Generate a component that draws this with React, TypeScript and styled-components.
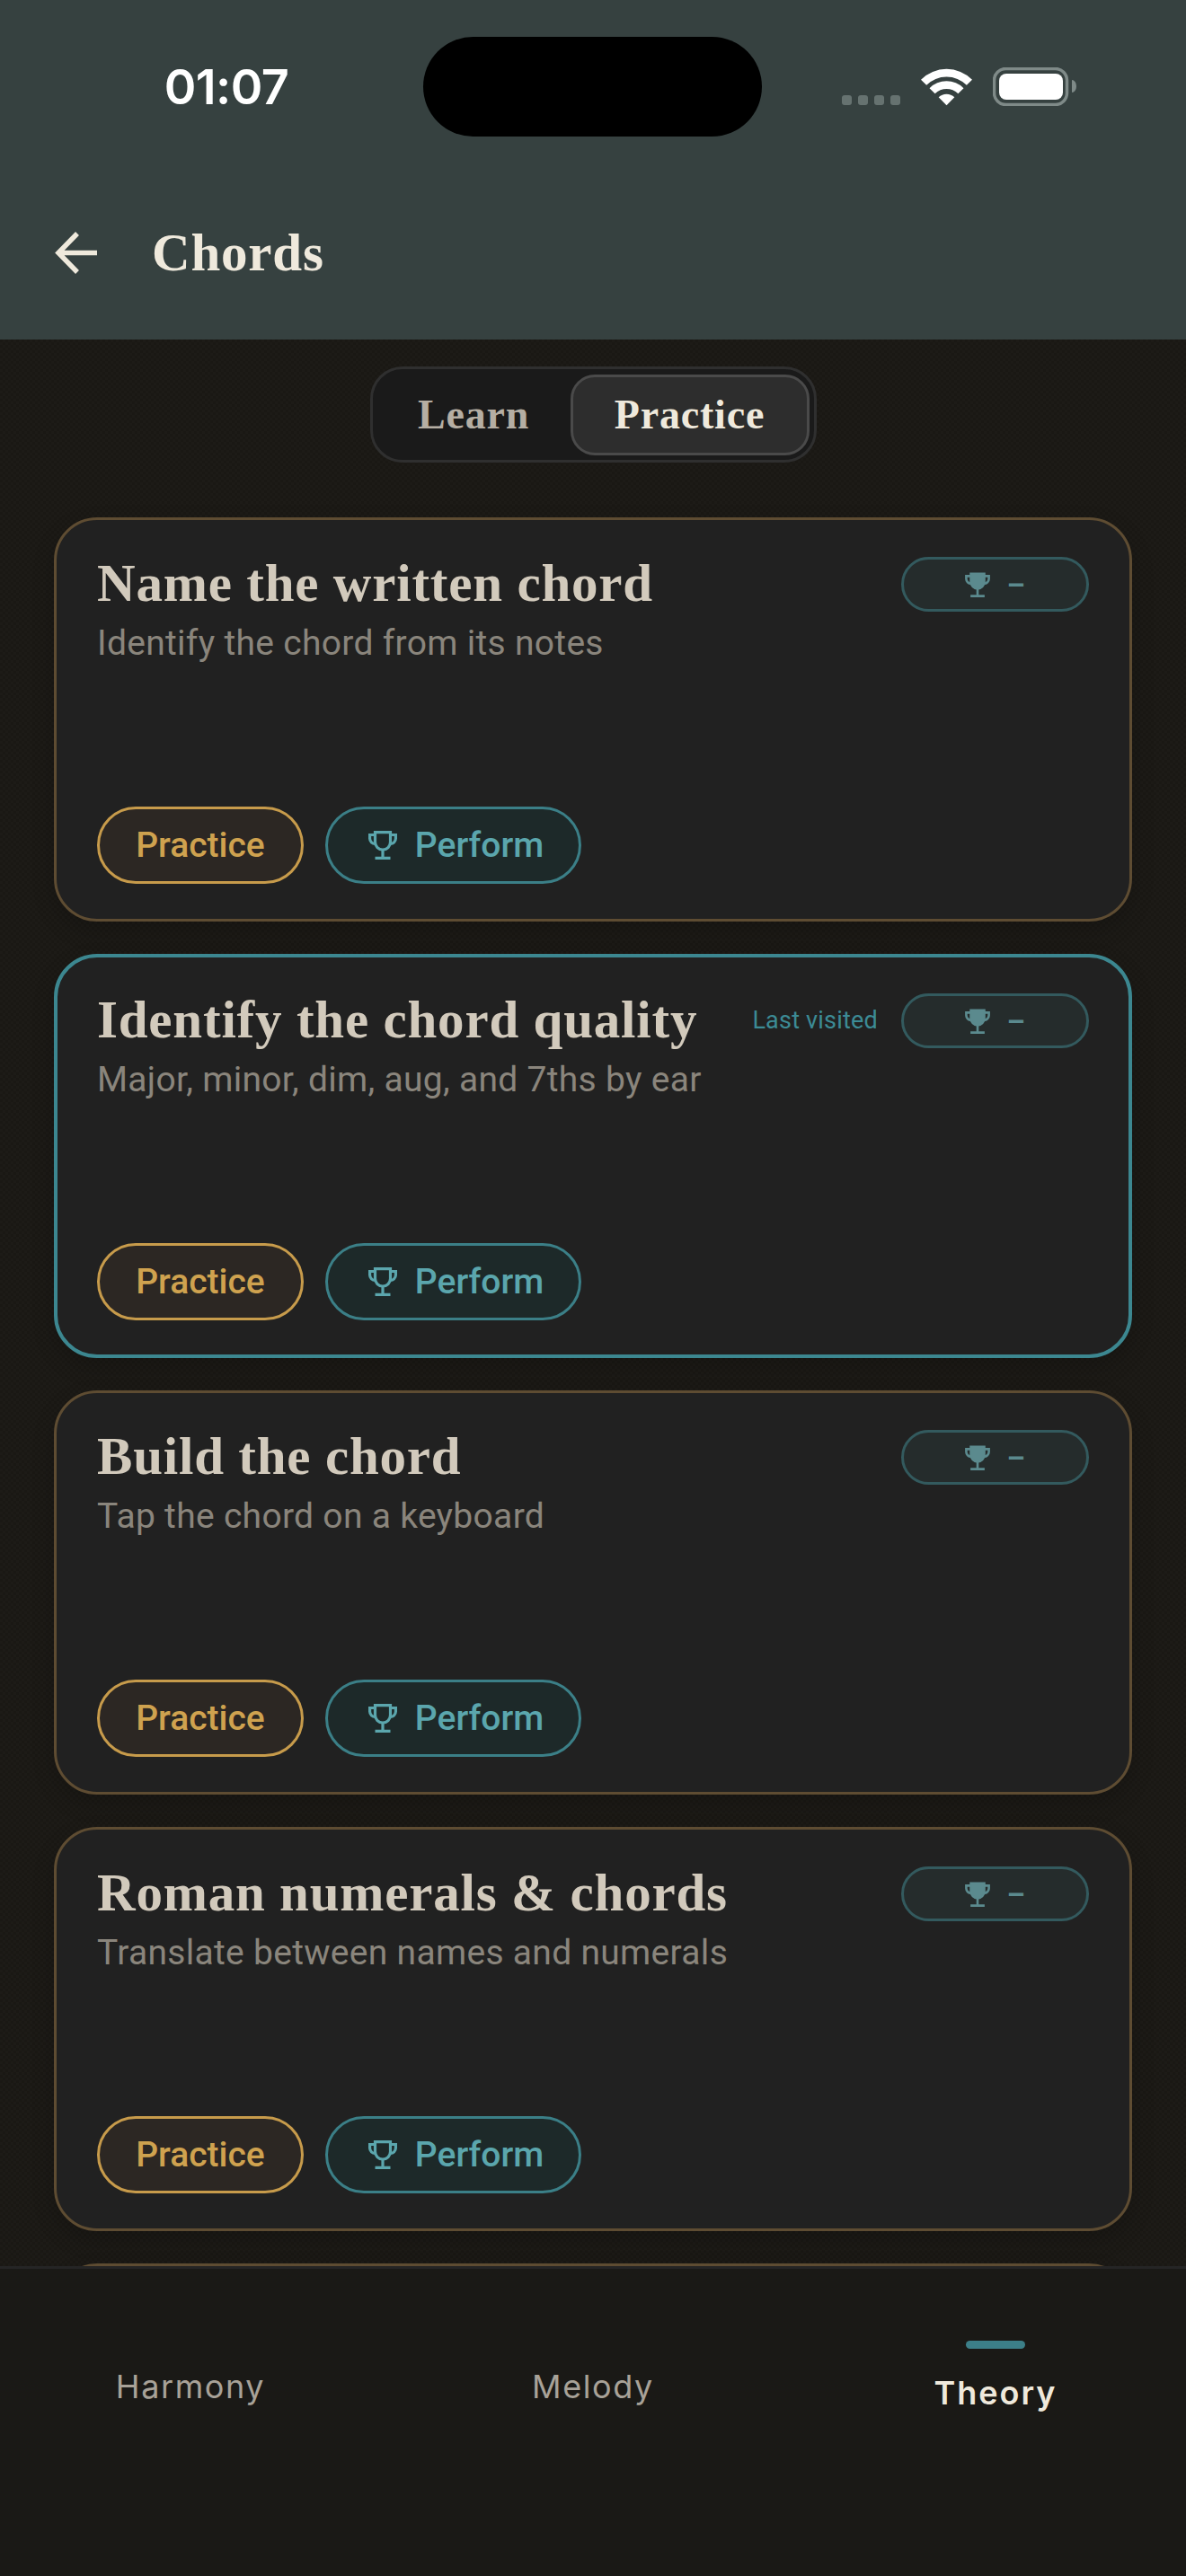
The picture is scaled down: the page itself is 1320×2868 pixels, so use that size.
// Chords practice screen
import React from 'react';
import styled, { createGlobalStyle } from 'styled-components';

const GlobalStyle = createGlobalStyle`
    html, body { margin: 0; padding: 0; background: #1a1814; }
    * { box-sizing: border-box; }
`;

const SERIF = '"Liberation Serif", serif';
const SANS = 'Roboto, "Liberation Sans", sans-serif';
const UI = 'Inter, "Liberation Sans", sans-serif';

const Page = styled.div`
    width: 1320px;
    height: 2868px;
    display: flex;
    flex-direction: column;
    overflow: hidden;
    background-color: #1a1814;
    background-image: repeating-conic-gradient(rgba(255, 255, 255, 0.01) 0 25%, transparent 0 50%);
    background-size: 6px 6px;
`;

// ---- header ----
const Header = styled.header`
    flex: 0 0 378px;
    padding-top: 41px;
    background: #364140;
`;
const StatusBar = styled.div`
    display: flex;
    height: 111px;
`;
const TimeSlot = styled.div`
    width: 471px;
    padding-left: 33px;
    display: flex;
    align-items: center;
    justify-content: center;
`;
const Time = styled.span`
    font: 600 54px/1 ${UI};
    color: #fff;
    letter-spacing: -0.6px;
`;
const Island = styled.div`
    width: 377px;
    height: 111px;
    border-radius: 56px;
    background: #000;
`;
const StatusIcons = styled.div`
    display: flex;
    align-items: center;
    padding-left: 89px;
`;
const Dots = styled.div`
    display: flex;
    gap: 7px;
    align-self: flex-end;
    margin: 0 23px 35px 0;
`;
const Dot = styled.i`
    width: 11px;
    height: 11px;
    border-radius: 3px;
    background: #667270;
`;
const WifiIcon = styled.svg`
    margin-right: 23px;
    display: block;
`;
const NavRow = styled.div`
    display: flex;
    align-items: center;
    height: 90px;
    margin-top: 84px;
    padding-left: 61px;
    gap: 61px;
`;
const ScreenTitle = styled.h1`
    margin: 0;
    font: 700 59px/1 ${SERIF};
    letter-spacing: 0.8px;
    color: #efe9dc;
`;

// ---- segmented control ----
const Content = styled.main`
    flex: 1;
    min-height: 0;
    overflow: hidden;
    display: flex;
    flex-direction: column;
    align-items: center;
    padding-top: 30px;
`;
const Segmented = styled.div`
    flex: none;
    width: 497px;
    height: 107px;
    display: flex;
    align-items: center;
    justify-content: space-between;
    padding: 0 5px;
    border: 3px solid #2f2f2f;
    border-radius: 36px;
    background: #1a1a1a;
`;
const Segment = styled.div<{ $active?: boolean }>`
    height: 90px;
    width: ${(p) => (p.$active ? '266px' : '215px')};
    display: flex;
    align-items: center;
    justify-content: center;
    border-radius: 27px;
    border: 3px solid ${(p) => (p.$active ? '#4a4a4a' : 'transparent')};
    background: ${(p) => (p.$active ? '#2d2d2d' : 'transparent')};
    color: ${(p) => (p.$active ? '#efe9dc' : '#b5aea3')};
    font: 700 46px/1 ${SERIF};
    letter-spacing: 0.8px;
`;

// ---- cards ----
const CardList = styled.div`
    flex: none;
    width: 1200px;
    margin-top: 61px;
    display: flex;
    flex-direction: column;
    gap: 36px;
`;
const Card = styled.article<{ $visited?: boolean }>`
    height: 450px;
    flex: 0 0 450px;
    display: flex;
    flex-direction: column;
    padding: ${(p) => (p.$visited ? '40px 44px 38px' : '41px 45px 39px')};
    border: ${(p) => (p.$visited ? '4px solid #3c8790' : '3px solid #5e4c32')};
    border-radius: 48px;
    background: #212121;
    box-shadow: 0 10px 24px rgba(0, 0, 0, 0.18);
`;
const CardTop = styled.div`
    display: flex;
    justify-content: space-between;
    align-items: flex-start;
`;
const CardTitle = styled.h2`
    margin: -2px 0 0;
    font: 700 59px/62px ${SERIF};
    letter-spacing: 0.8px;
    color: #d2cabc;
    white-space: nowrap;
`;
const CardSub = styled.p`
    margin: 11px 0 0;
    font: 400 39px/50px ${SANS};
    letter-spacing: 0.3px;
    color: #8a857c;
    white-space: nowrap;
`;
const Meta = styled.div`
    display: flex;
    align-items: center;
    gap: 26px;
`;
const LastVisited = styled.span`
    font: 400 27px/1 ${SANS};
    letter-spacing: 0.2px;
    color: #3c8b95;
`;
const Badge = styled.div`
    width: 209px;
    height: 61px;
    display: flex;
    align-items: center;
    justify-content: center;
    gap: 18px;
    border: 3px solid #335a5e;
    border-radius: 31px;
    background: #252c2c;
    color: #5b8a8e;
`;
const Dash = styled.span`
    font: 700 32px/1 ${SANS};
`;
const Actions = styled.div`
    margin-top: auto;
    display: flex;
    gap: 24px;
`;
const Pill = styled.button<{ $tone: 'gold' | 'teal' }>`
    height: 86px;
    width: ${(p) => (p.$tone === 'gold' ? '230px' : '285px')};
    display: flex;
    align-items: center;
    justify-content: center;
    gap: 20px;
    padding: ${(p) => (p.$tone === 'gold' ? '0' : '0 0 0 6px')};
    border: 3px solid ${(p) => (p.$tone === 'gold' ? '#c79b4b' : '#3b7f87')};
    border-radius: 43px;
    background: ${(p) => (p.$tone === 'gold' ? '#2c2723' : '#1d2929')};
    color: ${(p) => (p.$tone === 'gold' ? '#cfa24f' : '#5ba6ad')};
    font: 500 39px/1 ${SANS};
`;

// ---- bottom tabs ----
const TabBar = styled.nav`
    flex: 0 0 345px;
    display: grid;
    grid-template-columns: repeat(3, 448px);
    justify-content: center;
    border-top: 3px solid #252525;
    background: #1a1916;
`;
const Tab = styled.div<{ $active?: boolean }>`
    display: flex;
    flex-direction: column;
    align-items: center;
    padding-top: ${(p) => (p.$active ? '80px' : '109px')};
    font: ${(p) => (p.$active ? 600 : 400)} 36px/44px ${UI};
    letter-spacing: ${(p) => (p.$active ? '2px' : '1.6px')};
    color: ${(p) => (p.$active ? '#efe9dc' : '#a8a298')};
`;
const TabMark = styled.i`
    width: 66px;
    height: 9px;
    margin-bottom: 27px;
    border-radius: 5px;
    background: #3c7f88;
`;

const TrophyOutline = () => (
    <svg width="32" height="32" viewBox="0 0 32 32" fill="none" stroke="currentColor" strokeWidth="3.2">
        <path d="M7.5 1.6H24.5V12.5A8.5 8.5 0 0 1 7.5 12.5Z" />
        <path d="M7.5 4.5H1.6V8.5A6 6 0 0 0 7.8 14.5M24.5 4.5H30.4V8.5A6 6 0 0 1 24.2 14.5" />
        <path d="M16 21V30M7.5 30.4H24.5" />
    </svg>
);

const TrophySolid = () => (
    <svg width="28" height="28" viewBox="0 0 32 32" fill="currentColor" stroke="currentColor" strokeWidth="3">
        <path d="M7.5 2H24.5V12.5A8.5 8.5 0 0 1 7.5 12.5Z" />
        <path d="M7.5 5H1.6V8.5A6 6 0 0 0 7.8 14.5M24.5 5H30.4V8.5A6 6 0 0 1 24.2 14.5" fill="none" />
        <path d="M16 21V30M7 30.4H25" fill="none" />
    </svg>
);

const drills = [
    { title: 'Name the written chord', sub: 'Identify the chord from its notes' },
    { title: 'Identify the chord quality', sub: 'Major, minor, dim, aug, and 7ths by ear', visited: true },
    { title: 'Build the chord', sub: 'Tap the chord on a keyboard' },
    { title: 'Roman numerals & chords', sub: 'Translate between names and numerals' },
];

const App = () => {
    return (
        <Page>
            <GlobalStyle />
            <Header>
                <StatusBar>
                    <TimeSlot>
                        <Time>01:07</Time>
                    </TimeSlot>
                    <Island />
                    <StatusIcons>
                        <Dots>
                            <Dot />
                            <Dot />
                            <Dot />
                            <Dot />
                        </Dots>
                        <WifiIcon width="57" height="42" viewBox="0 0 59.4 42" fill="#fff">
                            <path d="M0 12.3A42 42 0 0 1 59.4 12.3L53 18.7A33 33 0 0 0 6.4 18.7Z" />
                            <path d="M9.9 22.2A28 28 0 0 1 49.5 22.2L43.1 28.6A19 19 0 0 0 16.3 28.6Z" />
                            <path d="M20.5 32.8A13 13 0 0 1 38.9 32.8L29.7 42Z" />
                        </WifiIcon>
                        <svg width="93" height="43" viewBox="0 0 93 43">
                            <rect x="1.5" y="1.5" width="81" height="40" rx="13" fill="none" stroke="#7f8a88" strokeWidth="3.5" />
                            <rect x="7" y="7" width="71" height="29" rx="8" fill="#fff" />
                            <path d="M88 14a5 7 0 0 1 5 7a5 7 0 0 1-5 7Z" fill="#7f8a88" />
                        </svg>
                    </StatusIcons>
                </StatusBar>
                <NavRow>
                    <svg width="47" height="47" viewBox="0 0 47 47" fill="none" stroke="#efe9dc" strokeWidth="5.5">
                        <path d="M47 23.5H4M25 2L4 23.5L25 45" />
                    </svg>
                    <ScreenTitle>Chords</ScreenTitle>
                </NavRow>
            </Header>

            <Content>
                <Segmented>
                    <Segment>Learn</Segment>
                    <Segment $active>Practice</Segment>
                </Segmented>
                <CardList>
                    {drills.map((d) => (
                        <Card key={d.title} $visited={d.visited}>
                            <CardTop>
                                <div>
                                    <CardTitle>{d.title}</CardTitle>
                                    <CardSub>{d.sub}</CardSub>
                                </div>
                                <Meta>
                                    {d.visited && <LastVisited>Last visited</LastVisited>}
                                    <Badge>
                                        <TrophySolid />
                                        <Dash>–</Dash>
                                    </Badge>
                                </Meta>
                            </CardTop>
                            <Actions>
                                <Pill $tone="gold">Practice</Pill>
                                <Pill $tone="teal">
                                    <TrophyOutline />
                                    Perform
                                </Pill>
                            </Actions>
                        </Card>
                    ))}
                    {/* next card just peeks out above the tab bar */}
                    <Card />
                </CardList>
            </Content>

            <TabBar>
                <Tab>Harmony</Tab>
                <Tab>Melody</Tab>
                <Tab $active>
                    <TabMark />
                    Theory
                </Tab>
            </TabBar>
        </Page>
    );
};

export default App;
